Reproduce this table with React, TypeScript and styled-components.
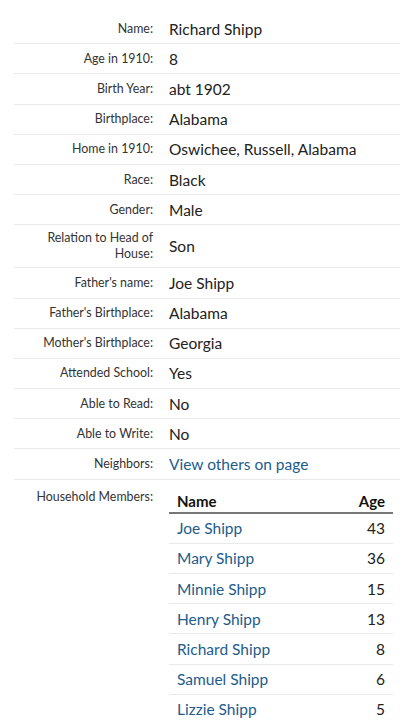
import React from 'react';
import styled, { createGlobalStyle } from 'styled-components';

const GlobalStyle = createGlobalStyle`
  body {
    margin: 0;
    background: #fff;
    font-family: Lato, "Open Sans", sans-serif;
  }
`;

const Page = styled.div`
  padding: 14px 10px 0 14px;
`;

const Row = styled.div<{ $tall?: boolean; $top?: boolean }>`
  display: grid;
  grid-template-columns: 139px 1fr;
  column-gap: 16px;
  align-items: ${props => (props.$top ? 'start' : 'center')};
  min-height: ${props => (props.$tall ? '42px' : '29.2px')};
  border-bottom: ${props => (props.$top ? 'none' : '1px solid #e9e9e9')};
  padding-top: ${props => (props.$top ? '9px' : '0')};
`;

const Label = styled.div`
  text-align: right;
  font-size: 12.4px;
  line-height: 16px;
  color: #333;
`;

const Value = styled.div`
  font-size: 15.5px;
  line-height: 20px;
  color: #222;
`;

const Link = styled.a`
  color: #1d5c8c;
  text-decoration: none;
`;

const Table = styled.table`
  width: 224px;
  border-collapse: collapse;
  margin-top: -5px;
`;

const Th = styled.th<{ $right?: boolean }>`
  text-align: ${props => (props.$right ? 'right' : 'left')};
  font-size: 15px;
  line-height: 18px;
  font-weight: 700;
  color: #111;
  padding: 8px 8px 2px 8px;
  border-bottom: 2px solid #777;
`;

const Td = styled.td<{ $right?: boolean }>`
  text-align: ${props => (props.$right ? 'right' : 'left')};
  font-size: 15.5px;
  color: ${props => (props.$right ? '#222' : '#1d5c8c')};
  height: 29.2px;
  padding: 0 8px;
  border-bottom: 1px solid #e9e9e9;
`;

const facts: [string, string][] = [
  ['Name:', 'Richard Shipp'],
  ['Age in 1910:', '8'],
  ['Birth Year:', 'abt 1902'],
  ['Birthplace:', 'Alabama'],
  ['Home in 1910:', 'Oswichee, Russell, Alabama'],
  ['Race:', 'Black'],
  ['Gender:', 'Male'],
  ['Relation to Head of House:', 'Son'],
  ["Father's name:", 'Joe Shipp'],
  ["Father's Birthplace:", 'Alabama'],
  ["Mother's Birthplace:", 'Georgia'],
  ['Attended School:', 'Yes'],
  ['Able to Read:', 'No'],
  ['Able to Write:', 'No']
];

const household: [string, number][] = [
  ['Joe Shipp', 43],
  ['Mary Shipp', 36],
  ['Minnie Shipp', 15],
  ['Henry Shipp', 13],
  ['Richard Shipp', 8],
  ['Samuel Shipp', 6],
  ['Lizzie Shipp', 5]
];

const App: React.FC = () => {
  return (
    <>
      <GlobalStyle />
      <Page>
        {facts.map(([label, value]) => (
          <Row key={label} $tall={label.length > 20}>
            <Label>{label}</Label>
            <Value>{value}</Value>
          </Row>
        ))}
        <Row>
          <Label>Neighbors:</Label>
          <Value>
            <Link href="#">View others on page</Link>
          </Value>
        </Row>
        <Row $top>
          <Label>Household Members:</Label>
          <Table>
            <thead>
              <tr>
                <Th>Name</Th>
                <Th $right>Age</Th>
              </tr>
            </thead>
            <tbody>
              {household.map(([name, age]) => (
                <tr key={name}>
                  <Td>{name}</Td>
                  <Td $right>{age}</Td>
                </tr>
              ))}
            </tbody>
          </Table>
        </Row>
      </Page>
    </>
  );
};

export default App;
